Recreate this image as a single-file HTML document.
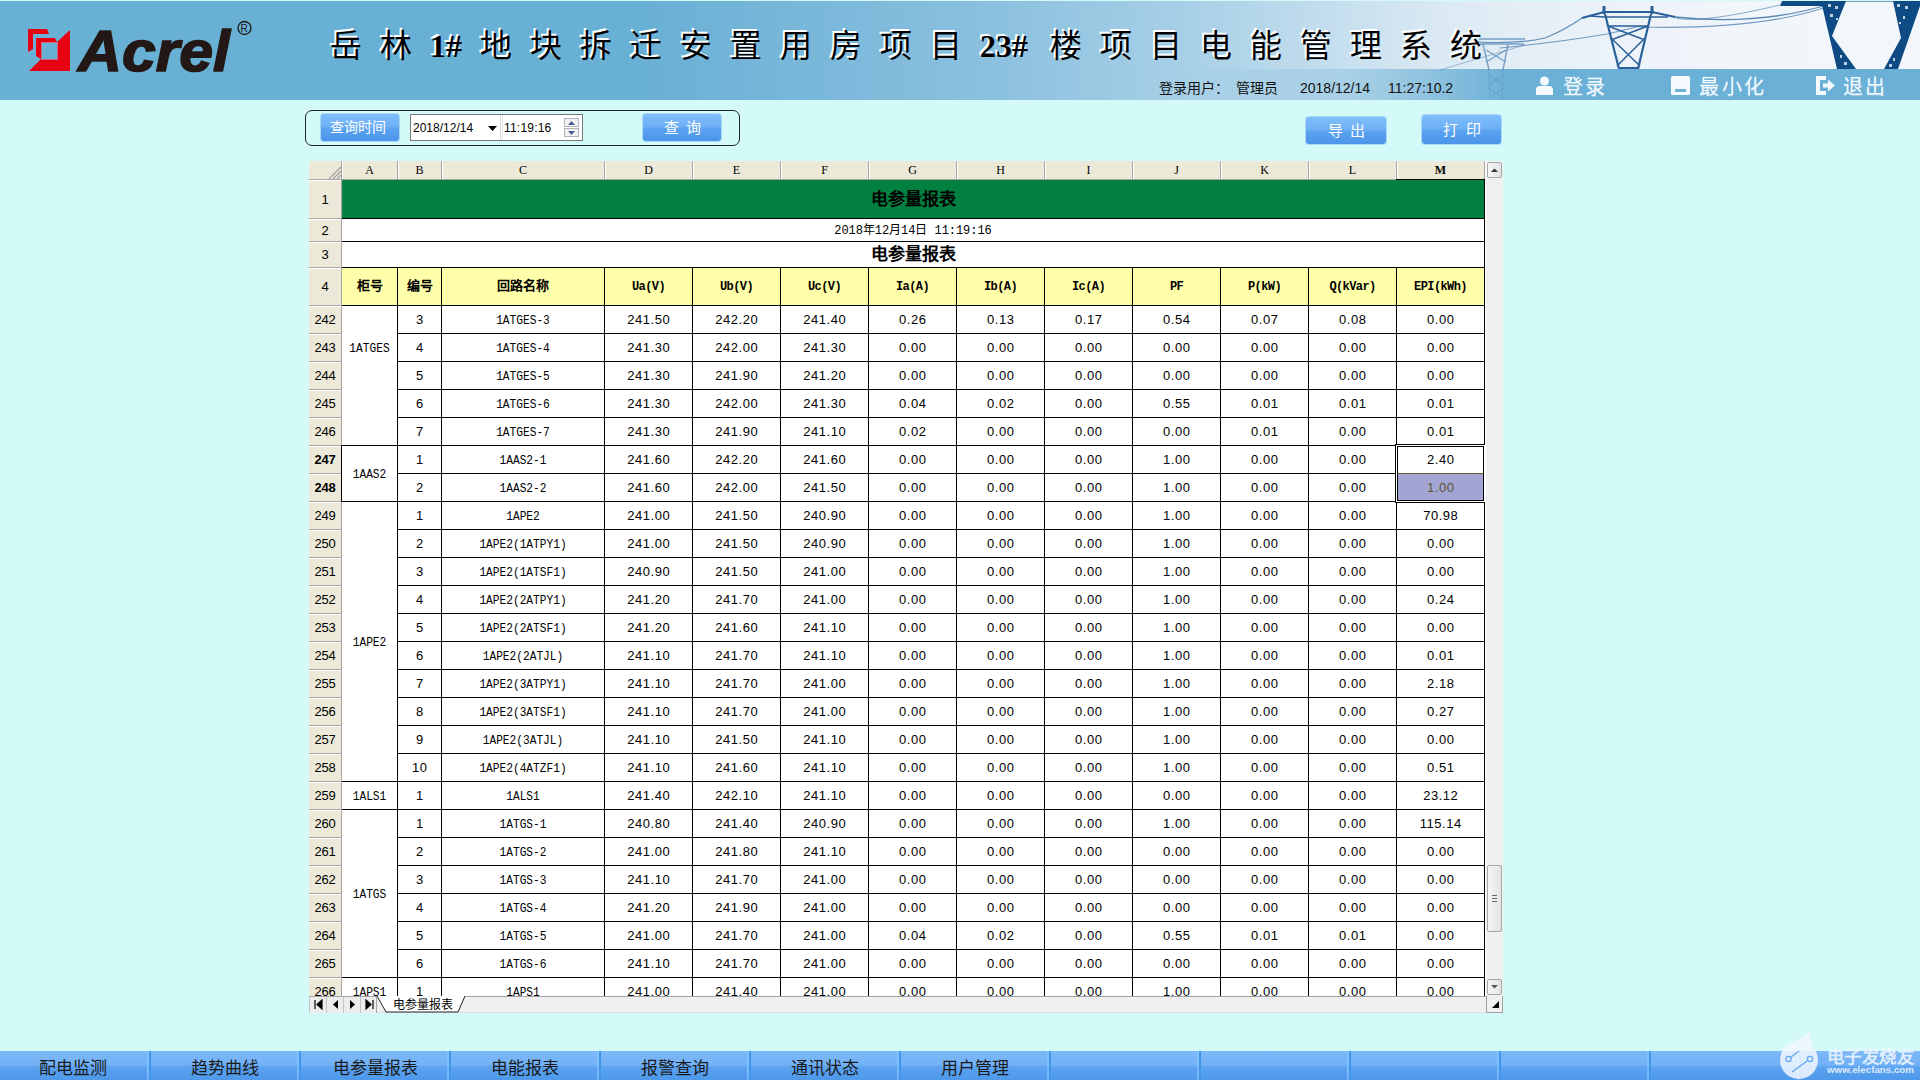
<!DOCTYPE html>
<html lang="zh-CN">
<head>
<meta charset="utf-8">
<title>电参量报表</title>
<style>
*{margin:0;padding:0;box-sizing:border-box}
html,body{width:1920px;height:1080px;overflow:hidden}
body{background:#D3F9F9;font-family:"Liberation Sans",sans-serif;position:relative}
.abs{position:absolute}
#hdr{position:absolute;left:0;top:1px;width:1920px;height:99px;
 background:linear-gradient(90deg,#69B0D5 0px,#69B0D5 640px,#7AB8DA 820px,#8CC1DF 1000px,#A6CFE6 1180px,#C4DEEE 1330px,#DCEAF3 1450px,#EAF1F8 1580px,#F1F6FA 1750px,#F3F7FB 1920px)}
#band{position:absolute;left:1180px;top:68px;width:740px;height:31px;
 background:linear-gradient(90deg,rgba(107,176,214,0) 0px,rgba(107,176,214,0.35) 170px,rgba(107,176,214,0.8) 280px,#6BB0D6 330px)}
#title{position:absolute;left:329px;top:26px;width:1200px;height:40px;white-space:nowrap;font-family:"Liberation Serif",serif;font-weight:500;font-size:32px;color:#000;text-shadow:-2px -2px 0 #fff;line-height:38px}
#title span{position:absolute;top:0}
#user{position:absolute;top:78px;left:1159px;font-size:14px;color:#111;white-space:nowrap;line-height:18px}
.hb{position:absolute;top:74px;color:#F4FAFF;font-size:20px;font-weight:300;letter-spacing:2px;line-height:24px;white-space:nowrap;text-shadow:0 1px 0 rgba(255,255,255,0.3)}
/* toolbar */
#qbox{position:absolute;left:305px;top:110px;width:435px;height:36px;border:1px solid #222;border-radius:7px}
.btn{position:absolute;height:27px;border-radius:3px;background:linear-gradient(180deg,#80BEFA 0%,#6FB0F6 45%,#5AA2F0 55%,#4B95EA 100%);color:#fff;font-size:16px;line-height:27px;text-align:center;white-space:nowrap;box-shadow:0 0 0 1px rgba(90,160,240,0.35)}
#dt{position:absolute;left:410px;top:114px;width:173px;height:27px;background:#fff;border:1px solid #777}
.mono{font-family:"Liberation Mono",monospace}
/* sheet */
#sheet{position:absolute;left:309px;top:161px;width:1176px;height:835px;overflow:hidden;background:#fff}
#sheet i{position:absolute;display:block}
#sheet .t{position:absolute;display:block;text-align:center;height:16px;line-height:16px;font-weight:normal;white-space:nowrap;color:#000}
.ch{font-family:"Liberation Serif",serif;font-size:12px}
.chb{font-weight:bold!important}
.rh{font-family:"Liberation Sans",sans-serif;font-size:13px;letter-spacing:-0.2px}
.rb{font-weight:bold!important}
.d{font-family:"Liberation Sans",sans-serif;font-size:13px;letter-spacing:0.5px;text-indent:0.5px}
.nm{font-family:"Liberation Mono",monospace!important;font-size:13px;letter-spacing:0!important;text-indent:0!important;transform:translateY(1px) scaleX(0.86)}
.sel{color:#5E5428!important}
.big{font-size:17px;font-weight:bold!important}
.date{font-family:"Liberation Mono",monospace;font-size:12px;letter-spacing:-0.05px}
.hd{font-family:"Liberation Mono",monospace;font-size:12px;font-weight:bold!important;letter-spacing:-0.6px}
.hdc{font-size:13px!important;letter-spacing:0!important}
#vscroll{position:absolute;left:1485px;top:161px;width:18px;height:835px;background:#F0F0F0;border-left:1px solid #fff}
.sbtn{position:absolute;left:1px;width:15px;height:16px;border:1px solid #A8A8A8;border-radius:2px;background:linear-gradient(90deg,#F6F6F6,#E2E2E2)}
#tabbar{position:absolute;left:309px;top:996px;width:1194px;height:17px;background:#EFEFEF;border-top:1px solid #A5A5A5;border-bottom:1px solid #E0E0E0}
.nb{position:absolute;top:0;width:17px;height:16px;border-left:1px solid #C4C4C4;background:#EDEDED}
/* nav */
#nav{position:absolute;left:0;top:1051px;width:1920px;height:29px;background:linear-gradient(180deg,#7DB9F8 0px,#72B1F7 14px,#5CA3F0 16px,#4D98EA 29px)}
.nv{position:absolute;top:0;width:150px;height:29px;border-right:2px solid #4196EC;box-shadow:inset -3px 0 0 -1px rgba(140,200,255,0.6)}
.nv span{position:absolute;left:0;right:0;top:7px;text-align:center;font-size:17px;line-height:22px;color:#1A1A1A;white-space:nowrap}
</style>
</head>
<body>
<div id="hdr">
 <div id="band"></div>
 <svg width="1920" height="99" style="position:absolute;left:0;top:0" viewBox="0 1 1920 99">
  <g fill="none" stroke="#3F75A8" stroke-linecap="round">
   <path d="M1440 70 Q1490 55 1525 45" stroke-width="1" opacity="0.45"/>
   <path d="M1478 42 Q1520 44 1545 38 Q1565 30 1582 18" stroke-width="1.2" opacity="0.8"/>
   <path d="M1500 48 Q1560 42 1607 34 Q1625 30 1640 26" stroke-width="1.1" opacity="0.7"/>
   <path d="M1675 17 Q1760 26 1830 4" stroke-width="1.3" opacity="0.85"/>
   <path d="M1640 27 Q1760 30 1830 6" stroke-width="1.1" opacity="0.7"/>
   <path d="M1676 18 Q1700 24 1780 5" stroke-width="1" opacity="0.6"/>
  </g>
  <g fill="none" stroke="#5F8DB8" stroke-width="1.4" opacity="0.8">
   <path d="M1479 39 H1525 M1480 44 H1524"/>
   <path d="M1483 44 L1489 70 M1508 44 L1503 70"/>
   <path d="M1486 50 L1506 62 M1506 50 L1486 62"/>
  </g>
  <g fill="none" stroke="#5F8DB8" stroke-width="1.3" opacity="0.35">
   <path d="M1489 70 L1490 99 M1503 70 L1502 99 M1489 75 L1503 85 M1503 75 L1489 85 M1489 88 L1503 98 M1503 88 L1489 98"/>
  </g>
  <g fill="none" stroke="#2A6199" stroke-width="2.2">
   <path d="M1582 18 L1604 12 H1652 L1675 17"/>
   <path d="M1590 16 L1604 17 H1652 L1668 17" stroke-width="1.4"/>
   <path d="M1604 6 V14 M1652 6 V14" stroke-width="3"/>
   <path d="M1605 14 L1619 69 M1651 14 L1638 69"/>
   <path d="M1607 26 H1649" stroke-width="1.4"/>
   <path d="M1611 38 L1640 66 M1645 38 L1617 66 M1608 26 L1645 40 M1648 26 L1611 40" stroke-width="1.5"/>
   <path d="M1618 68 H1639" stroke-width="2"/>
  </g>
  <g fill="#0E4A84">
   <path d="M1782 1 H1826 V6 H1780 Z"/>
   <path d="M1821 1 H1846 L1832 36 L1856 69 H1837 Z"/>
   <path d="M1893 1 H1920 V6 L1898 69 H1884 L1901 38 Z"/>
  </g>
  <path d="M1846 1.5 H1893" stroke="#7A9CC0" stroke-width="1"/>
  <g fill="#DCE8F2" opacity="0.85">
   <rect x="1828" y="4" width="3" height="3"/><rect x="1835" y="6" width="3" height="3"/><rect x="1830" y="14" width="3" height="3"/><rect x="1836" y="18" width="2" height="2"/>
   <rect x="1840" y="55" width="2" height="3"/><rect x="1844" y="62" width="3" height="3"/>
   <rect x="1897" y="4" width="3" height="3"/><rect x="1905" y="6" width="3" height="3"/><rect x="1903" y="16" width="2" height="3"/><rect x="1899" y="22" width="2" height="2"/>
   <rect x="1893" y="58" width="2" height="3"/><rect x="1889" y="64" width="3" height="3"/>
  </g>
 </svg>
 <!-- logo -->
 <svg width="240" height="60" style="position:absolute;left:20px;top:18px" viewBox="20 19 240 60">
  <g fill="#E60012">
   <path d="M28 29 H47 L49 34 H33 V49 L28 52 Z"/>
   <path d="M36 38 H55 L57 42 H41 V59 L36 56 Z"/>
   <path d="M70 30 V71 H29 L41 59 H57 V42 Z"/>
  </g>
  <rect x="41.5" y="42.5" width="16" height="17" fill="none" stroke="#C86A86" stroke-width="1"/>
  <text x="78" y="71" font-family="Liberation Sans" font-weight="bold" font-style="italic" font-size="58" fill="#231815" stroke="#231815" stroke-width="1.6" textLength="152" lengthAdjust="spacingAndGlyphs">Acrel</text>
  <circle cx="244.5" cy="28" r="6.5" fill="none" stroke="#231815" stroke-width="1.3"/>
  <text x="240.5" y="32" font-family="Liberation Sans" font-size="10" fill="#231815">R</text>
 </svg>
 <div id="title"><span style="left:1px">岳</span><span style="left:51px">林</span><span style="left:101px;font-weight:bold">1#</span><span style="left:151px">地</span><span style="left:201px">块</span><span style="left:251px">拆</span><span style="left:301px">迁</span><span style="left:351px">安</span><span style="left:401px">置</span><span style="left:451px">用</span><span style="left:501px">房</span><span style="left:551px">项</span><span style="left:601px">目</span><span style="left:651px;font-weight:bold">23#</span><span style="left:721px">楼</span><span style="left:771px">项</span><span style="left:821px">目</span><span style="left:871px">电</span><span style="left:921px">能</span><span style="left:971px">管</span><span style="left:1021px">理</span><span style="left:1071px">系</span><span style="left:1121px">统</span></div>
 <div id="user"><span style="position:absolute;left:0">登录用户：</span><span style="position:absolute;left:77px">管理员</span><span style="position:absolute;left:141px">2018/12/14</span><span style="position:absolute;left:229px">11:27:10.2</span></div>
 <!-- header buttons -->
 <svg width="19" height="19" style="position:absolute;left:1535px;top:75px" viewBox="0 0 19 19"><circle cx="9.5" cy="5" r="4.5" fill="#F4FAFF"/><path d="M1 19 V14 Q1 10 5 10 H14 Q18 10 18 14 V19 Z" fill="#F4FAFF"/></svg>
 <div class="hb" style="left:1563px">登录</div>
 <svg width="19" height="19" style="position:absolute;left:1671px;top:75px" viewBox="0 0 19 19"><rect x="0" y="0" width="19" height="19" rx="1.5" fill="#F4FAFF"/><rect x="4" y="13" width="11" height="3" fill="#6BB0D6"/></svg>
 <div class="hb" style="left:1699px;letter-spacing:2.5px">最小化</div>
 <svg width="19" height="19" style="position:absolute;left:1816px;top:75px" viewBox="0 0 19 19"><path d="M0 0 H10 V4 H4 V15 H10 V19 H0 Z" fill="#F4FAFF"/><path d="M7 7.5 H12 V3.5 L19 9.5 L12 15.5 V11.5 H7 Z" fill="#F4FAFF"/></svg>
 <div class="hb" style="left:1843px">退出</div>
</div>

<!-- toolbar -->
<div id="qbox"></div>
<div class="btn" style="left:321px;top:114px;width:78px;font-size:14px;text-indent:-4px">查询时间</div>
<div id="dt">
 <span style="position:absolute;left:2px;top:6px;font-size:12px;line-height:14px">2018/12/14</span>
 <svg width="9" height="5" style="position:absolute;left:77px;top:11px"><path d="M0 0 H9 L4.5 5 Z" fill="#000"/></svg>
 <i style="position:absolute;left:89px;top:0px;width:1px;height:25px;background:#D8D8D8;display:block"></i><i style="position:absolute;left:91px;top:0px;width:1px;height:25px;background:#E8E8E8;display:block"></i>
 <span style="position:absolute;left:93px;top:6px;font-size:12px;line-height:14px;letter-spacing:0.2px">11:19:16</span>
 <i style="position:absolute;left:153px;top:3px;width:15px;height:9px;border:1px solid #B0B4C0;background:#F2F2F2;display:block"></i>
 <i style="position:absolute;left:153px;top:13px;width:15px;height:9px;border:1px solid #B0B4C0;background:#F2F2F2;display:block"></i>
 <svg width="7" height="4" style="position:absolute;left:157px;top:6px"><path d="M0 4 H7 L3.5 0 Z" fill="#4A5A9A"/></svg>
 <svg width="7" height="4" style="position:absolute;left:157px;top:16px"><path d="M0 0 H7 L3.5 4 Z" fill="#4A5A9A"/></svg>
</div>
<div class="btn" style="left:643px;top:114px;width:78px;font-size:15px;letter-spacing:7px;text-indent:7px">查询</div>
<div class="btn" style="left:1306px;top:117px;width:80px;font-size:15px;letter-spacing:7px;text-indent:7px">导出</div>
<div class="btn" style="left:1422px;top:115px;width:79px;height:29px;line-height:29px;font-size:15px;letter-spacing:8px;text-indent:8px">打印</div>

<!-- sheet -->
<div id="sheet">
<i style="left:0px;top:0px;width:1175px;height:18px;background:#ECE9D8;"></i>
<i style="left:0px;top:18px;width:1175px;height:1px;background:#A5A5A5;"></i>
<i style="left:32px;top:0px;width:1px;height:19px;background:#A5A5A5;"></i>
<i style="left:33px;top:0px;width:1px;height:18px;background:#fff;"></i>
<i style="left:88px;top:0px;width:1px;height:18px;background:#A5A5A5;"></i>
<i style="left:89px;top:0px;width:1px;height:18px;background:#fff;"></i>
<i style="left:132px;top:0px;width:1px;height:18px;background:#A5A5A5;"></i>
<i style="left:133px;top:0px;width:1px;height:18px;background:#fff;"></i>
<i style="left:295px;top:0px;width:1px;height:18px;background:#A5A5A5;"></i>
<i style="left:296px;top:0px;width:1px;height:18px;background:#fff;"></i>
<i style="left:383px;top:0px;width:1px;height:18px;background:#A5A5A5;"></i>
<i style="left:384px;top:0px;width:1px;height:18px;background:#fff;"></i>
<i style="left:471px;top:0px;width:1px;height:18px;background:#A5A5A5;"></i>
<i style="left:472px;top:0px;width:1px;height:18px;background:#fff;"></i>
<i style="left:559px;top:0px;width:1px;height:18px;background:#A5A5A5;"></i>
<i style="left:560px;top:0px;width:1px;height:18px;background:#fff;"></i>
<i style="left:647px;top:0px;width:1px;height:18px;background:#A5A5A5;"></i>
<i style="left:648px;top:0px;width:1px;height:18px;background:#fff;"></i>
<i style="left:735px;top:0px;width:1px;height:18px;background:#A5A5A5;"></i>
<i style="left:736px;top:0px;width:1px;height:18px;background:#fff;"></i>
<i style="left:823px;top:0px;width:1px;height:18px;background:#A5A5A5;"></i>
<i style="left:824px;top:0px;width:1px;height:18px;background:#fff;"></i>
<i style="left:911px;top:0px;width:1px;height:18px;background:#A5A5A5;"></i>
<i style="left:912px;top:0px;width:1px;height:18px;background:#fff;"></i>
<i style="left:999px;top:0px;width:1px;height:18px;background:#A5A5A5;"></i>
<i style="left:1000px;top:0px;width:1px;height:18px;background:#fff;"></i>
<i style="left:1087px;top:0px;width:1px;height:18px;background:#A5A5A5;"></i>
<i style="left:1088px;top:0px;width:1px;height:18px;background:#fff;"></i>
<i style="left:1175px;top:0px;width:1px;height:18px;background:#A5A5A5;"></i>
<i style="left:1176px;top:0px;width:1px;height:18px;background:#fff;"></i>
<b class="t ch" style="left:33px;width:55px;top:1px">A</b>
<b class="t ch" style="left:89px;width:43px;top:1px">B</b>
<b class="t ch" style="left:133px;width:162px;top:1px">C</b>
<b class="t ch" style="left:296px;width:87px;top:1px">D</b>
<b class="t ch" style="left:384px;width:87px;top:1px">E</b>
<b class="t ch" style="left:472px;width:87px;top:1px">F</b>
<b class="t ch" style="left:560px;width:87px;top:1px">G</b>
<b class="t ch" style="left:648px;width:87px;top:1px">H</b>
<b class="t ch" style="left:736px;width:87px;top:1px">I</b>
<b class="t ch" style="left:824px;width:87px;top:1px">J</b>
<b class="t ch" style="left:912px;width:87px;top:1px">K</b>
<b class="t ch" style="left:1000px;width:87px;top:1px">L</b>
<b class="t ch chb" style="left:1088px;width:87px;top:1px">M</b>
<i style="left:1087px;top:18px;width:89px;height:1px;background:#000;"></i>
<i style="left:0px;top:19px;width:32px;height:816px;background:#ECE9D8;"></i>
<i style="left:32px;top:19px;width:1px;height:816px;background:#A5A5A5;"></i>
<i style="left:0px;top:19px;width:32px;height:1px;background:#fff;"></i>
<i style="left:0px;top:57px;width:32px;height:1px;background:#A5A5A5;"></i>
<b class="t rh" style="left:0px;width:32px;top:30.5px">1</b>
<i style="left:0px;top:58px;width:32px;height:1px;background:#fff;"></i>
<i style="left:0px;top:80px;width:32px;height:1px;background:#A5A5A5;"></i>
<b class="t rh" style="left:0px;width:32px;top:61.5px">2</b>
<i style="left:0px;top:81px;width:32px;height:1px;background:#fff;"></i>
<i style="left:0px;top:106px;width:32px;height:1px;background:#A5A5A5;"></i>
<b class="t rh" style="left:0px;width:32px;top:86.0px">3</b>
<i style="left:0px;top:107px;width:32px;height:1px;background:#fff;"></i>
<i style="left:0px;top:144px;width:32px;height:1px;background:#A5A5A5;"></i>
<b class="t rh" style="left:0px;width:32px;top:118.0px">4</b>
<i style="left:0px;top:145px;width:32px;height:1px;background:#fff;"></i>
<i style="left:0px;top:172px;width:32px;height:1px;background:#A5A5A5;"></i>
<b class="t rh" style="left:0px;width:32px;top:151.0px">242</b>
<i style="left:0px;top:173px;width:32px;height:1px;background:#fff;"></i>
<i style="left:0px;top:200px;width:32px;height:1px;background:#A5A5A5;"></i>
<b class="t rh" style="left:0px;width:32px;top:179.0px">243</b>
<i style="left:0px;top:201px;width:32px;height:1px;background:#fff;"></i>
<i style="left:0px;top:228px;width:32px;height:1px;background:#A5A5A5;"></i>
<b class="t rh" style="left:0px;width:32px;top:207.0px">244</b>
<i style="left:0px;top:229px;width:32px;height:1px;background:#fff;"></i>
<i style="left:0px;top:256px;width:32px;height:1px;background:#A5A5A5;"></i>
<b class="t rh" style="left:0px;width:32px;top:235.0px">245</b>
<i style="left:0px;top:257px;width:32px;height:1px;background:#fff;"></i>
<i style="left:0px;top:284px;width:32px;height:1px;background:#A5A5A5;"></i>
<b class="t rh" style="left:0px;width:32px;top:263.0px">246</b>
<i style="left:0px;top:285px;width:32px;height:1px;background:#fff;"></i>
<i style="left:0px;top:312px;width:32px;height:1px;background:#A5A5A5;"></i>
<b class="t rh rb" style="left:0px;width:32px;top:291.0px">247</b>
<i style="left:0px;top:313px;width:32px;height:1px;background:#fff;"></i>
<i style="left:0px;top:340px;width:32px;height:1px;background:#A5A5A5;"></i>
<b class="t rh rb" style="left:0px;width:32px;top:319.0px">248</b>
<i style="left:0px;top:341px;width:32px;height:1px;background:#fff;"></i>
<i style="left:0px;top:368px;width:32px;height:1px;background:#A5A5A5;"></i>
<b class="t rh" style="left:0px;width:32px;top:347.0px">249</b>
<i style="left:0px;top:369px;width:32px;height:1px;background:#fff;"></i>
<i style="left:0px;top:396px;width:32px;height:1px;background:#A5A5A5;"></i>
<b class="t rh" style="left:0px;width:32px;top:375.0px">250</b>
<i style="left:0px;top:397px;width:32px;height:1px;background:#fff;"></i>
<i style="left:0px;top:424px;width:32px;height:1px;background:#A5A5A5;"></i>
<b class="t rh" style="left:0px;width:32px;top:403.0px">251</b>
<i style="left:0px;top:425px;width:32px;height:1px;background:#fff;"></i>
<i style="left:0px;top:452px;width:32px;height:1px;background:#A5A5A5;"></i>
<b class="t rh" style="left:0px;width:32px;top:431.0px">252</b>
<i style="left:0px;top:453px;width:32px;height:1px;background:#fff;"></i>
<i style="left:0px;top:480px;width:32px;height:1px;background:#A5A5A5;"></i>
<b class="t rh" style="left:0px;width:32px;top:459.0px">253</b>
<i style="left:0px;top:481px;width:32px;height:1px;background:#fff;"></i>
<i style="left:0px;top:508px;width:32px;height:1px;background:#A5A5A5;"></i>
<b class="t rh" style="left:0px;width:32px;top:487.0px">254</b>
<i style="left:0px;top:509px;width:32px;height:1px;background:#fff;"></i>
<i style="left:0px;top:536px;width:32px;height:1px;background:#A5A5A5;"></i>
<b class="t rh" style="left:0px;width:32px;top:515.0px">255</b>
<i style="left:0px;top:537px;width:32px;height:1px;background:#fff;"></i>
<i style="left:0px;top:564px;width:32px;height:1px;background:#A5A5A5;"></i>
<b class="t rh" style="left:0px;width:32px;top:543.0px">256</b>
<i style="left:0px;top:565px;width:32px;height:1px;background:#fff;"></i>
<i style="left:0px;top:592px;width:32px;height:1px;background:#A5A5A5;"></i>
<b class="t rh" style="left:0px;width:32px;top:571.0px">257</b>
<i style="left:0px;top:593px;width:32px;height:1px;background:#fff;"></i>
<i style="left:0px;top:620px;width:32px;height:1px;background:#A5A5A5;"></i>
<b class="t rh" style="left:0px;width:32px;top:599.0px">258</b>
<i style="left:0px;top:621px;width:32px;height:1px;background:#fff;"></i>
<i style="left:0px;top:648px;width:32px;height:1px;background:#A5A5A5;"></i>
<b class="t rh" style="left:0px;width:32px;top:627.0px">259</b>
<i style="left:0px;top:649px;width:32px;height:1px;background:#fff;"></i>
<i style="left:0px;top:676px;width:32px;height:1px;background:#A5A5A5;"></i>
<b class="t rh" style="left:0px;width:32px;top:655.0px">260</b>
<i style="left:0px;top:677px;width:32px;height:1px;background:#fff;"></i>
<i style="left:0px;top:704px;width:32px;height:1px;background:#A5A5A5;"></i>
<b class="t rh" style="left:0px;width:32px;top:683.0px">261</b>
<i style="left:0px;top:705px;width:32px;height:1px;background:#fff;"></i>
<i style="left:0px;top:732px;width:32px;height:1px;background:#A5A5A5;"></i>
<b class="t rh" style="left:0px;width:32px;top:711.0px">262</b>
<i style="left:0px;top:733px;width:32px;height:1px;background:#fff;"></i>
<i style="left:0px;top:760px;width:32px;height:1px;background:#A5A5A5;"></i>
<b class="t rh" style="left:0px;width:32px;top:739.0px">263</b>
<i style="left:0px;top:761px;width:32px;height:1px;background:#fff;"></i>
<i style="left:0px;top:788px;width:32px;height:1px;background:#A5A5A5;"></i>
<b class="t rh" style="left:0px;width:32px;top:767.0px">264</b>
<i style="left:0px;top:789px;width:32px;height:1px;background:#fff;"></i>
<i style="left:0px;top:816px;width:32px;height:1px;background:#A5A5A5;"></i>
<b class="t rh" style="left:0px;width:32px;top:795.0px">265</b>
<i style="left:0px;top:817px;width:32px;height:1px;background:#fff;"></i>
<i style="left:0px;top:844px;width:32px;height:1px;background:#A5A5A5;"></i>
<b class="t rh" style="left:0px;width:32px;top:823.0px">266</b>
<i style="left:33px;top:19px;width:1142px;height:38px;background:#028040;"></i>
<i style="left:33px;top:57px;width:1143px;height:1px;background:#000;"></i>
<i style="left:1175px;top:19px;width:1px;height:38px;background:#000;"></i>
<i style="left:33px;top:58px;width:1142px;height:22px;background:#fff;"></i>
<i style="left:33px;top:80px;width:1143px;height:1px;background:#000;"></i>
<i style="left:33px;top:81px;width:1142px;height:25px;background:#fff;"></i>
<i style="left:33px;top:106px;width:1143px;height:1px;background:#000;"></i>
<i style="left:1175px;top:58px;width:1px;height:49px;background:#000;"></i>
<b class="t big" style="left:33px;width:1142px;top:31px">电参量报表</b>
<b class="t date" style="left:33px;width:1142px;top:62px">2018年12月14日 11:19:16</b>
<b class="t big" style="left:33px;width:1142px;top:86px">电参量报表</b>
<i style="left:33px;top:107px;width:1142px;height:37px;background:#FFFFAA;"></i>
<b class="t hd hdc" style="left:33px;width:55px;top:117.5px">柜号</b>
<b class="t hd hdc" style="left:89px;width:43px;top:117.5px">编号</b>
<b class="t hd hdc" style="left:133px;width:162px;top:117.5px">回路名称</b>
<b class="t hd" style="left:296px;width:87px;top:117.5px">Ua(V)</b>
<b class="t hd" style="left:384px;width:87px;top:117.5px">Ub(V)</b>
<b class="t hd" style="left:472px;width:87px;top:117.5px">Uc(V)</b>
<b class="t hd" style="left:560px;width:87px;top:117.5px">Ia(A)</b>
<b class="t hd" style="left:648px;width:87px;top:117.5px">Ib(A)</b>
<b class="t hd" style="left:736px;width:87px;top:117.5px">Ic(A)</b>
<b class="t hd" style="left:824px;width:87px;top:117.5px">PF</b>
<b class="t hd" style="left:912px;width:87px;top:117.5px">P(kW)</b>
<b class="t hd" style="left:1000px;width:87px;top:117.5px">Q(kVar)</b>
<b class="t hd" style="left:1088px;width:87px;top:117.5px">EPI(kWh)</b>
<i style="left:33px;top:145px;width:1142px;height:690px;background:#fff;"></i>
<i style="left:33px;top:144px;width:1143px;height:1px;background:#000;"></i>
<i style="left:89px;top:172px;width:1087px;height:1px;background:#000;"></i>
<i style="left:89px;top:200px;width:1087px;height:1px;background:#000;"></i>
<i style="left:89px;top:228px;width:1087px;height:1px;background:#000;"></i>
<i style="left:89px;top:256px;width:1087px;height:1px;background:#000;"></i>
<i style="left:33px;top:284px;width:1143px;height:1px;background:#000;"></i>
<i style="left:89px;top:312px;width:1087px;height:1px;background:#000;"></i>
<i style="left:33px;top:340px;width:1143px;height:1px;background:#000;"></i>
<i style="left:89px;top:368px;width:1087px;height:1px;background:#000;"></i>
<i style="left:89px;top:396px;width:1087px;height:1px;background:#000;"></i>
<i style="left:89px;top:424px;width:1087px;height:1px;background:#000;"></i>
<i style="left:89px;top:452px;width:1087px;height:1px;background:#000;"></i>
<i style="left:89px;top:480px;width:1087px;height:1px;background:#000;"></i>
<i style="left:89px;top:508px;width:1087px;height:1px;background:#000;"></i>
<i style="left:89px;top:536px;width:1087px;height:1px;background:#000;"></i>
<i style="left:89px;top:564px;width:1087px;height:1px;background:#000;"></i>
<i style="left:89px;top:592px;width:1087px;height:1px;background:#000;"></i>
<i style="left:33px;top:620px;width:1143px;height:1px;background:#000;"></i>
<i style="left:33px;top:648px;width:1143px;height:1px;background:#000;"></i>
<i style="left:89px;top:676px;width:1087px;height:1px;background:#000;"></i>
<i style="left:89px;top:704px;width:1087px;height:1px;background:#000;"></i>
<i style="left:89px;top:732px;width:1087px;height:1px;background:#000;"></i>
<i style="left:89px;top:760px;width:1087px;height:1px;background:#000;"></i>
<i style="left:89px;top:788px;width:1087px;height:1px;background:#000;"></i>
<i style="left:33px;top:816px;width:1143px;height:1px;background:#000;"></i>
<i style="left:88px;top:107px;width:1px;height:728px;background:#000;"></i>
<i style="left:132px;top:107px;width:1px;height:728px;background:#000;"></i>
<i style="left:295px;top:107px;width:1px;height:728px;background:#000;"></i>
<i style="left:383px;top:107px;width:1px;height:728px;background:#000;"></i>
<i style="left:471px;top:107px;width:1px;height:728px;background:#000;"></i>
<i style="left:559px;top:107px;width:1px;height:728px;background:#000;"></i>
<i style="left:647px;top:107px;width:1px;height:728px;background:#000;"></i>
<i style="left:735px;top:107px;width:1px;height:728px;background:#000;"></i>
<i style="left:823px;top:107px;width:1px;height:728px;background:#000;"></i>
<i style="left:911px;top:107px;width:1px;height:728px;background:#000;"></i>
<i style="left:999px;top:107px;width:1px;height:728px;background:#000;"></i>
<i style="left:1087px;top:107px;width:1px;height:728px;background:#000;"></i>
<i style="left:1175px;top:107px;width:1px;height:728px;background:#000;"></i>
<i style="left:32px;top:284px;width:1px;height:57px;background:#000;"></i>
<i style="left:1086px;top:283px;width:91px;height:59px;background:#000;"></i>
<i style="left:1087px;top:284px;width:89px;height:57px;background:#fff;"></i>
<i style="left:1088px;top:285px;width:87px;height:55px;background:#000;"></i>
<i style="left:1089px;top:286px;width:85px;height:26px;background:#fff;"></i>
<i style="left:1089px;top:312px;width:85px;height:1px;background:#6B6030;"></i>
<i style="left:1089px;top:313px;width:85px;height:26px;background:#A2A5D4;"></i>
<b class="t d" style="left:89px;width:43px;top:150.5px">3</b>
<b class="t d nm" style="left:133px;width:162px;top:150.5px">1ATGES-3</b>
<b class="t d" style="left:296px;width:87px;top:150.5px">241.50</b>
<b class="t d" style="left:384px;width:87px;top:150.5px">242.20</b>
<b class="t d" style="left:472px;width:87px;top:150.5px">241.40</b>
<b class="t d" style="left:560px;width:87px;top:150.5px">0.26</b>
<b class="t d" style="left:648px;width:87px;top:150.5px">0.13</b>
<b class="t d" style="left:736px;width:87px;top:150.5px">0.17</b>
<b class="t d" style="left:824px;width:87px;top:150.5px">0.54</b>
<b class="t d" style="left:912px;width:87px;top:150.5px">0.07</b>
<b class="t d" style="left:1000px;width:87px;top:150.5px">0.08</b>
<b class="t d" style="left:1088px;width:87px;top:150.5px">0.00</b>
<b class="t d" style="left:89px;width:43px;top:178.5px">4</b>
<b class="t d nm" style="left:133px;width:162px;top:178.5px">1ATGES-4</b>
<b class="t d" style="left:296px;width:87px;top:178.5px">241.30</b>
<b class="t d" style="left:384px;width:87px;top:178.5px">242.00</b>
<b class="t d" style="left:472px;width:87px;top:178.5px">241.30</b>
<b class="t d" style="left:560px;width:87px;top:178.5px">0.00</b>
<b class="t d" style="left:648px;width:87px;top:178.5px">0.00</b>
<b class="t d" style="left:736px;width:87px;top:178.5px">0.00</b>
<b class="t d" style="left:824px;width:87px;top:178.5px">0.00</b>
<b class="t d" style="left:912px;width:87px;top:178.5px">0.00</b>
<b class="t d" style="left:1000px;width:87px;top:178.5px">0.00</b>
<b class="t d" style="left:1088px;width:87px;top:178.5px">0.00</b>
<b class="t d" style="left:89px;width:43px;top:206.5px">5</b>
<b class="t d nm" style="left:133px;width:162px;top:206.5px">1ATGES-5</b>
<b class="t d" style="left:296px;width:87px;top:206.5px">241.30</b>
<b class="t d" style="left:384px;width:87px;top:206.5px">241.90</b>
<b class="t d" style="left:472px;width:87px;top:206.5px">241.20</b>
<b class="t d" style="left:560px;width:87px;top:206.5px">0.00</b>
<b class="t d" style="left:648px;width:87px;top:206.5px">0.00</b>
<b class="t d" style="left:736px;width:87px;top:206.5px">0.00</b>
<b class="t d" style="left:824px;width:87px;top:206.5px">0.00</b>
<b class="t d" style="left:912px;width:87px;top:206.5px">0.00</b>
<b class="t d" style="left:1000px;width:87px;top:206.5px">0.00</b>
<b class="t d" style="left:1088px;width:87px;top:206.5px">0.00</b>
<b class="t d" style="left:89px;width:43px;top:234.5px">6</b>
<b class="t d nm" style="left:133px;width:162px;top:234.5px">1ATGES-6</b>
<b class="t d" style="left:296px;width:87px;top:234.5px">241.30</b>
<b class="t d" style="left:384px;width:87px;top:234.5px">242.00</b>
<b class="t d" style="left:472px;width:87px;top:234.5px">241.30</b>
<b class="t d" style="left:560px;width:87px;top:234.5px">0.04</b>
<b class="t d" style="left:648px;width:87px;top:234.5px">0.02</b>
<b class="t d" style="left:736px;width:87px;top:234.5px">0.00</b>
<b class="t d" style="left:824px;width:87px;top:234.5px">0.55</b>
<b class="t d" style="left:912px;width:87px;top:234.5px">0.01</b>
<b class="t d" style="left:1000px;width:87px;top:234.5px">0.01</b>
<b class="t d" style="left:1088px;width:87px;top:234.5px">0.01</b>
<b class="t d" style="left:89px;width:43px;top:262.5px">7</b>
<b class="t d nm" style="left:133px;width:162px;top:262.5px">1ATGES-7</b>
<b class="t d" style="left:296px;width:87px;top:262.5px">241.30</b>
<b class="t d" style="left:384px;width:87px;top:262.5px">241.90</b>
<b class="t d" style="left:472px;width:87px;top:262.5px">241.10</b>
<b class="t d" style="left:560px;width:87px;top:262.5px">0.02</b>
<b class="t d" style="left:648px;width:87px;top:262.5px">0.00</b>
<b class="t d" style="left:736px;width:87px;top:262.5px">0.00</b>
<b class="t d" style="left:824px;width:87px;top:262.5px">0.00</b>
<b class="t d" style="left:912px;width:87px;top:262.5px">0.01</b>
<b class="t d" style="left:1000px;width:87px;top:262.5px">0.00</b>
<b class="t d" style="left:1088px;width:87px;top:262.5px">0.01</b>
<b class="t d" style="left:89px;width:43px;top:290.5px">1</b>
<b class="t d nm" style="left:133px;width:162px;top:290.5px">1AAS2-1</b>
<b class="t d" style="left:296px;width:87px;top:290.5px">241.60</b>
<b class="t d" style="left:384px;width:87px;top:290.5px">242.20</b>
<b class="t d" style="left:472px;width:87px;top:290.5px">241.60</b>
<b class="t d" style="left:560px;width:87px;top:290.5px">0.00</b>
<b class="t d" style="left:648px;width:87px;top:290.5px">0.00</b>
<b class="t d" style="left:736px;width:87px;top:290.5px">0.00</b>
<b class="t d" style="left:824px;width:87px;top:290.5px">1.00</b>
<b class="t d" style="left:912px;width:87px;top:290.5px">0.00</b>
<b class="t d" style="left:1000px;width:87px;top:290.5px">0.00</b>
<b class="t d" style="left:1088px;width:87px;top:290.5px">2.40</b>
<b class="t d" style="left:89px;width:43px;top:318.5px">2</b>
<b class="t d nm" style="left:133px;width:162px;top:318.5px">1AAS2-2</b>
<b class="t d" style="left:296px;width:87px;top:318.5px">241.60</b>
<b class="t d" style="left:384px;width:87px;top:318.5px">242.00</b>
<b class="t d" style="left:472px;width:87px;top:318.5px">241.50</b>
<b class="t d" style="left:560px;width:87px;top:318.5px">0.00</b>
<b class="t d" style="left:648px;width:87px;top:318.5px">0.00</b>
<b class="t d" style="left:736px;width:87px;top:318.5px">0.00</b>
<b class="t d" style="left:824px;width:87px;top:318.5px">1.00</b>
<b class="t d" style="left:912px;width:87px;top:318.5px">0.00</b>
<b class="t d" style="left:1000px;width:87px;top:318.5px">0.00</b>
<b class="t d sel" style="left:1088px;width:87px;top:318.5px">1.00</b>
<b class="t d" style="left:89px;width:43px;top:346.5px">1</b>
<b class="t d nm" style="left:133px;width:162px;top:346.5px">1APE2</b>
<b class="t d" style="left:296px;width:87px;top:346.5px">241.00</b>
<b class="t d" style="left:384px;width:87px;top:346.5px">241.50</b>
<b class="t d" style="left:472px;width:87px;top:346.5px">240.90</b>
<b class="t d" style="left:560px;width:87px;top:346.5px">0.00</b>
<b class="t d" style="left:648px;width:87px;top:346.5px">0.00</b>
<b class="t d" style="left:736px;width:87px;top:346.5px">0.00</b>
<b class="t d" style="left:824px;width:87px;top:346.5px">1.00</b>
<b class="t d" style="left:912px;width:87px;top:346.5px">0.00</b>
<b class="t d" style="left:1000px;width:87px;top:346.5px">0.00</b>
<b class="t d" style="left:1088px;width:87px;top:346.5px">70.98</b>
<b class="t d" style="left:89px;width:43px;top:374.5px">2</b>
<b class="t d nm" style="left:133px;width:162px;top:374.5px">1APE2(1ATPY1)</b>
<b class="t d" style="left:296px;width:87px;top:374.5px">241.00</b>
<b class="t d" style="left:384px;width:87px;top:374.5px">241.50</b>
<b class="t d" style="left:472px;width:87px;top:374.5px">240.90</b>
<b class="t d" style="left:560px;width:87px;top:374.5px">0.00</b>
<b class="t d" style="left:648px;width:87px;top:374.5px">0.00</b>
<b class="t d" style="left:736px;width:87px;top:374.5px">0.00</b>
<b class="t d" style="left:824px;width:87px;top:374.5px">1.00</b>
<b class="t d" style="left:912px;width:87px;top:374.5px">0.00</b>
<b class="t d" style="left:1000px;width:87px;top:374.5px">0.00</b>
<b class="t d" style="left:1088px;width:87px;top:374.5px">0.00</b>
<b class="t d" style="left:89px;width:43px;top:402.5px">3</b>
<b class="t d nm" style="left:133px;width:162px;top:402.5px">1APE2(1ATSF1)</b>
<b class="t d" style="left:296px;width:87px;top:402.5px">240.90</b>
<b class="t d" style="left:384px;width:87px;top:402.5px">241.50</b>
<b class="t d" style="left:472px;width:87px;top:402.5px">241.00</b>
<b class="t d" style="left:560px;width:87px;top:402.5px">0.00</b>
<b class="t d" style="left:648px;width:87px;top:402.5px">0.00</b>
<b class="t d" style="left:736px;width:87px;top:402.5px">0.00</b>
<b class="t d" style="left:824px;width:87px;top:402.5px">1.00</b>
<b class="t d" style="left:912px;width:87px;top:402.5px">0.00</b>
<b class="t d" style="left:1000px;width:87px;top:402.5px">0.00</b>
<b class="t d" style="left:1088px;width:87px;top:402.5px">0.00</b>
<b class="t d" style="left:89px;width:43px;top:430.5px">4</b>
<b class="t d nm" style="left:133px;width:162px;top:430.5px">1APE2(2ATPY1)</b>
<b class="t d" style="left:296px;width:87px;top:430.5px">241.20</b>
<b class="t d" style="left:384px;width:87px;top:430.5px">241.70</b>
<b class="t d" style="left:472px;width:87px;top:430.5px">241.00</b>
<b class="t d" style="left:560px;width:87px;top:430.5px">0.00</b>
<b class="t d" style="left:648px;width:87px;top:430.5px">0.00</b>
<b class="t d" style="left:736px;width:87px;top:430.5px">0.00</b>
<b class="t d" style="left:824px;width:87px;top:430.5px">1.00</b>
<b class="t d" style="left:912px;width:87px;top:430.5px">0.00</b>
<b class="t d" style="left:1000px;width:87px;top:430.5px">0.00</b>
<b class="t d" style="left:1088px;width:87px;top:430.5px">0.24</b>
<b class="t d" style="left:89px;width:43px;top:458.5px">5</b>
<b class="t d nm" style="left:133px;width:162px;top:458.5px">1APE2(2ATSF1)</b>
<b class="t d" style="left:296px;width:87px;top:458.5px">241.20</b>
<b class="t d" style="left:384px;width:87px;top:458.5px">241.60</b>
<b class="t d" style="left:472px;width:87px;top:458.5px">241.10</b>
<b class="t d" style="left:560px;width:87px;top:458.5px">0.00</b>
<b class="t d" style="left:648px;width:87px;top:458.5px">0.00</b>
<b class="t d" style="left:736px;width:87px;top:458.5px">0.00</b>
<b class="t d" style="left:824px;width:87px;top:458.5px">1.00</b>
<b class="t d" style="left:912px;width:87px;top:458.5px">0.00</b>
<b class="t d" style="left:1000px;width:87px;top:458.5px">0.00</b>
<b class="t d" style="left:1088px;width:87px;top:458.5px">0.00</b>
<b class="t d" style="left:89px;width:43px;top:486.5px">6</b>
<b class="t d nm" style="left:133px;width:162px;top:486.5px">1APE2(2ATJL)</b>
<b class="t d" style="left:296px;width:87px;top:486.5px">241.10</b>
<b class="t d" style="left:384px;width:87px;top:486.5px">241.70</b>
<b class="t d" style="left:472px;width:87px;top:486.5px">241.10</b>
<b class="t d" style="left:560px;width:87px;top:486.5px">0.00</b>
<b class="t d" style="left:648px;width:87px;top:486.5px">0.00</b>
<b class="t d" style="left:736px;width:87px;top:486.5px">0.00</b>
<b class="t d" style="left:824px;width:87px;top:486.5px">1.00</b>
<b class="t d" style="left:912px;width:87px;top:486.5px">0.00</b>
<b class="t d" style="left:1000px;width:87px;top:486.5px">0.00</b>
<b class="t d" style="left:1088px;width:87px;top:486.5px">0.01</b>
<b class="t d" style="left:89px;width:43px;top:514.5px">7</b>
<b class="t d nm" style="left:133px;width:162px;top:514.5px">1APE2(3ATPY1)</b>
<b class="t d" style="left:296px;width:87px;top:514.5px">241.10</b>
<b class="t d" style="left:384px;width:87px;top:514.5px">241.70</b>
<b class="t d" style="left:472px;width:87px;top:514.5px">241.00</b>
<b class="t d" style="left:560px;width:87px;top:514.5px">0.00</b>
<b class="t d" style="left:648px;width:87px;top:514.5px">0.00</b>
<b class="t d" style="left:736px;width:87px;top:514.5px">0.00</b>
<b class="t d" style="left:824px;width:87px;top:514.5px">1.00</b>
<b class="t d" style="left:912px;width:87px;top:514.5px">0.00</b>
<b class="t d" style="left:1000px;width:87px;top:514.5px">0.00</b>
<b class="t d" style="left:1088px;width:87px;top:514.5px">2.18</b>
<b class="t d" style="left:89px;width:43px;top:542.5px">8</b>
<b class="t d nm" style="left:133px;width:162px;top:542.5px">1APE2(3ATSF1)</b>
<b class="t d" style="left:296px;width:87px;top:542.5px">241.10</b>
<b class="t d" style="left:384px;width:87px;top:542.5px">241.70</b>
<b class="t d" style="left:472px;width:87px;top:542.5px">241.00</b>
<b class="t d" style="left:560px;width:87px;top:542.5px">0.00</b>
<b class="t d" style="left:648px;width:87px;top:542.5px">0.00</b>
<b class="t d" style="left:736px;width:87px;top:542.5px">0.00</b>
<b class="t d" style="left:824px;width:87px;top:542.5px">1.00</b>
<b class="t d" style="left:912px;width:87px;top:542.5px">0.00</b>
<b class="t d" style="left:1000px;width:87px;top:542.5px">0.00</b>
<b class="t d" style="left:1088px;width:87px;top:542.5px">0.27</b>
<b class="t d" style="left:89px;width:43px;top:570.5px">9</b>
<b class="t d nm" style="left:133px;width:162px;top:570.5px">1APE2(3ATJL)</b>
<b class="t d" style="left:296px;width:87px;top:570.5px">241.10</b>
<b class="t d" style="left:384px;width:87px;top:570.5px">241.50</b>
<b class="t d" style="left:472px;width:87px;top:570.5px">241.10</b>
<b class="t d" style="left:560px;width:87px;top:570.5px">0.00</b>
<b class="t d" style="left:648px;width:87px;top:570.5px">0.00</b>
<b class="t d" style="left:736px;width:87px;top:570.5px">0.00</b>
<b class="t d" style="left:824px;width:87px;top:570.5px">1.00</b>
<b class="t d" style="left:912px;width:87px;top:570.5px">0.00</b>
<b class="t d" style="left:1000px;width:87px;top:570.5px">0.00</b>
<b class="t d" style="left:1088px;width:87px;top:570.5px">0.00</b>
<b class="t d" style="left:89px;width:43px;top:598.5px">10</b>
<b class="t d nm" style="left:133px;width:162px;top:598.5px">1APE2(4ATZF1)</b>
<b class="t d" style="left:296px;width:87px;top:598.5px">241.10</b>
<b class="t d" style="left:384px;width:87px;top:598.5px">241.60</b>
<b class="t d" style="left:472px;width:87px;top:598.5px">241.10</b>
<b class="t d" style="left:560px;width:87px;top:598.5px">0.00</b>
<b class="t d" style="left:648px;width:87px;top:598.5px">0.00</b>
<b class="t d" style="left:736px;width:87px;top:598.5px">0.00</b>
<b class="t d" style="left:824px;width:87px;top:598.5px">1.00</b>
<b class="t d" style="left:912px;width:87px;top:598.5px">0.00</b>
<b class="t d" style="left:1000px;width:87px;top:598.5px">0.00</b>
<b class="t d" style="left:1088px;width:87px;top:598.5px">0.51</b>
<b class="t d" style="left:89px;width:43px;top:626.5px">1</b>
<b class="t d nm" style="left:133px;width:162px;top:626.5px">1ALS1</b>
<b class="t d" style="left:296px;width:87px;top:626.5px">241.40</b>
<b class="t d" style="left:384px;width:87px;top:626.5px">242.10</b>
<b class="t d" style="left:472px;width:87px;top:626.5px">241.10</b>
<b class="t d" style="left:560px;width:87px;top:626.5px">0.00</b>
<b class="t d" style="left:648px;width:87px;top:626.5px">0.00</b>
<b class="t d" style="left:736px;width:87px;top:626.5px">0.00</b>
<b class="t d" style="left:824px;width:87px;top:626.5px">0.00</b>
<b class="t d" style="left:912px;width:87px;top:626.5px">0.00</b>
<b class="t d" style="left:1000px;width:87px;top:626.5px">0.00</b>
<b class="t d" style="left:1088px;width:87px;top:626.5px">23.12</b>
<b class="t d" style="left:89px;width:43px;top:654.5px">1</b>
<b class="t d nm" style="left:133px;width:162px;top:654.5px">1ATGS-1</b>
<b class="t d" style="left:296px;width:87px;top:654.5px">240.80</b>
<b class="t d" style="left:384px;width:87px;top:654.5px">241.40</b>
<b class="t d" style="left:472px;width:87px;top:654.5px">240.90</b>
<b class="t d" style="left:560px;width:87px;top:654.5px">0.00</b>
<b class="t d" style="left:648px;width:87px;top:654.5px">0.00</b>
<b class="t d" style="left:736px;width:87px;top:654.5px">0.00</b>
<b class="t d" style="left:824px;width:87px;top:654.5px">1.00</b>
<b class="t d" style="left:912px;width:87px;top:654.5px">0.00</b>
<b class="t d" style="left:1000px;width:87px;top:654.5px">0.00</b>
<b class="t d" style="left:1088px;width:87px;top:654.5px">115.14</b>
<b class="t d" style="left:89px;width:43px;top:682.5px">2</b>
<b class="t d nm" style="left:133px;width:162px;top:682.5px">1ATGS-2</b>
<b class="t d" style="left:296px;width:87px;top:682.5px">241.00</b>
<b class="t d" style="left:384px;width:87px;top:682.5px">241.80</b>
<b class="t d" style="left:472px;width:87px;top:682.5px">241.10</b>
<b class="t d" style="left:560px;width:87px;top:682.5px">0.00</b>
<b class="t d" style="left:648px;width:87px;top:682.5px">0.00</b>
<b class="t d" style="left:736px;width:87px;top:682.5px">0.00</b>
<b class="t d" style="left:824px;width:87px;top:682.5px">0.00</b>
<b class="t d" style="left:912px;width:87px;top:682.5px">0.00</b>
<b class="t d" style="left:1000px;width:87px;top:682.5px">0.00</b>
<b class="t d" style="left:1088px;width:87px;top:682.5px">0.00</b>
<b class="t d" style="left:89px;width:43px;top:710.5px">3</b>
<b class="t d nm" style="left:133px;width:162px;top:710.5px">1ATGS-3</b>
<b class="t d" style="left:296px;width:87px;top:710.5px">241.10</b>
<b class="t d" style="left:384px;width:87px;top:710.5px">241.70</b>
<b class="t d" style="left:472px;width:87px;top:710.5px">241.00</b>
<b class="t d" style="left:560px;width:87px;top:710.5px">0.00</b>
<b class="t d" style="left:648px;width:87px;top:710.5px">0.00</b>
<b class="t d" style="left:736px;width:87px;top:710.5px">0.00</b>
<b class="t d" style="left:824px;width:87px;top:710.5px">0.00</b>
<b class="t d" style="left:912px;width:87px;top:710.5px">0.00</b>
<b class="t d" style="left:1000px;width:87px;top:710.5px">0.00</b>
<b class="t d" style="left:1088px;width:87px;top:710.5px">0.00</b>
<b class="t d" style="left:89px;width:43px;top:738.5px">4</b>
<b class="t d nm" style="left:133px;width:162px;top:738.5px">1ATGS-4</b>
<b class="t d" style="left:296px;width:87px;top:738.5px">241.20</b>
<b class="t d" style="left:384px;width:87px;top:738.5px">241.90</b>
<b class="t d" style="left:472px;width:87px;top:738.5px">241.00</b>
<b class="t d" style="left:560px;width:87px;top:738.5px">0.00</b>
<b class="t d" style="left:648px;width:87px;top:738.5px">0.00</b>
<b class="t d" style="left:736px;width:87px;top:738.5px">0.00</b>
<b class="t d" style="left:824px;width:87px;top:738.5px">0.00</b>
<b class="t d" style="left:912px;width:87px;top:738.5px">0.00</b>
<b class="t d" style="left:1000px;width:87px;top:738.5px">0.00</b>
<b class="t d" style="left:1088px;width:87px;top:738.5px">0.00</b>
<b class="t d" style="left:89px;width:43px;top:766.5px">5</b>
<b class="t d nm" style="left:133px;width:162px;top:766.5px">1ATGS-5</b>
<b class="t d" style="left:296px;width:87px;top:766.5px">241.00</b>
<b class="t d" style="left:384px;width:87px;top:766.5px">241.70</b>
<b class="t d" style="left:472px;width:87px;top:766.5px">241.00</b>
<b class="t d" style="left:560px;width:87px;top:766.5px">0.04</b>
<b class="t d" style="left:648px;width:87px;top:766.5px">0.02</b>
<b class="t d" style="left:736px;width:87px;top:766.5px">0.00</b>
<b class="t d" style="left:824px;width:87px;top:766.5px">0.55</b>
<b class="t d" style="left:912px;width:87px;top:766.5px">0.01</b>
<b class="t d" style="left:1000px;width:87px;top:766.5px">0.01</b>
<b class="t d" style="left:1088px;width:87px;top:766.5px">0.00</b>
<b class="t d" style="left:89px;width:43px;top:794.5px">6</b>
<b class="t d nm" style="left:133px;width:162px;top:794.5px">1ATGS-6</b>
<b class="t d" style="left:296px;width:87px;top:794.5px">241.10</b>
<b class="t d" style="left:384px;width:87px;top:794.5px">241.70</b>
<b class="t d" style="left:472px;width:87px;top:794.5px">241.00</b>
<b class="t d" style="left:560px;width:87px;top:794.5px">0.00</b>
<b class="t d" style="left:648px;width:87px;top:794.5px">0.00</b>
<b class="t d" style="left:736px;width:87px;top:794.5px">0.00</b>
<b class="t d" style="left:824px;width:87px;top:794.5px">0.00</b>
<b class="t d" style="left:912px;width:87px;top:794.5px">0.00</b>
<b class="t d" style="left:1000px;width:87px;top:794.5px">0.00</b>
<b class="t d" style="left:1088px;width:87px;top:794.5px">0.00</b>
<b class="t d" style="left:89px;width:43px;top:822.5px">1</b>
<b class="t d nm" style="left:133px;width:162px;top:822.5px">1APS1</b>
<b class="t d" style="left:296px;width:87px;top:822.5px">241.00</b>
<b class="t d" style="left:384px;width:87px;top:822.5px">241.40</b>
<b class="t d" style="left:472px;width:87px;top:822.5px">241.00</b>
<b class="t d" style="left:560px;width:87px;top:822.5px">0.00</b>
<b class="t d" style="left:648px;width:87px;top:822.5px">0.00</b>
<b class="t d" style="left:736px;width:87px;top:822.5px">0.00</b>
<b class="t d" style="left:824px;width:87px;top:822.5px">1.00</b>
<b class="t d" style="left:912px;width:87px;top:822.5px">0.00</b>
<b class="t d" style="left:1000px;width:87px;top:822.5px">0.00</b>
<b class="t d" style="left:1088px;width:87px;top:822.5px">0.00</b>
<b class="t d nm" style="left:33px;width:55px;top:178.5px">1ATGES</b>
<b class="t d nm" style="left:33px;width:55px;top:304.5px">1AAS2</b>
<b class="t d nm" style="left:33px;width:55px;top:472.5px">1APE2</b>
<b class="t d nm" style="left:33px;width:55px;top:626.5px">1ALS1</b>
<b class="t d nm" style="left:33px;width:55px;top:724.5px">1ATGS</b>
<b class="t d nm" style="left:33px;width:55px;top:822.5px">1APS1</b>
<svg width="32" height="18" style="position:absolute;left:0;top:0"><path d="M20 18 L32 6 M24 18 L32 10 M28 18 L32 14" stroke="#A0A0A0" stroke-width="1.3"/></svg>
</div>
<div id="vscroll">
 <div class="sbtn" style="top:1px"><svg width="13" height="14" style="position:absolute;left:0;top:0"><path d="M3 9 L6.5 5.5 L10 9" fill="#333"/></svg></div>
 <div class="sbtn" style="top:704px;height:67px"><svg width="13" height="65" style="position:absolute;left:0;top:0"><path d="M4 29.5 H9 M4 32.5 H9 M4 35.5 H9" stroke="#666" stroke-width="1"/></svg></div>
 <div class="sbtn" style="top:818px"><svg width="13" height="14" style="position:absolute;left:0;top:0"><path d="M3 5 L6.5 8.5 L10 5" fill="#555"/></svg></div>
</div>
<div id="tabbar">
 <div class="nb" style="left:0"><svg width="17" height="15"><path d="M5 3 V12 M12 3 L7 7.5 L12 12 Z" stroke="#000" stroke-width="1.2" fill="#000"/></svg></div>
 <div class="nb" style="left:17px"><svg width="17" height="15"><path d="M11 3 L6 7.5 L11 12 Z" fill="#000"/></svg></div>
 <div class="nb" style="left:34px"><svg width="17" height="15"><path d="M6 3 L11 7.5 L6 12 Z" fill="#000"/></svg></div>
 <div class="nb" style="left:51px;border-right:1px solid #A5A5A5"><svg width="17" height="15"><path d="M5 3 L10 7.5 L5 12 Z M12 3 V12" stroke="#000" stroke-width="1.2" fill="#000"/></svg></div>
 <svg width="95" height="17" style="position:absolute;left:68px;top:-1px"><path d="M0 0 L9 16 H81 L88 0" fill="#fff" stroke="#222" stroke-width="1"/></svg>
 <span style="position:absolute;left:84px;top:1px;font-size:12px;line-height:14px;color:#000">电参量报表</span>
</div>
<div id="corner" style="position:absolute;left:1486px;top:996px;width:17px;height:17px;background:#F0F0F0;border:1px solid #A0A0A0;border-top:none"><svg width="15" height="15"><path d="M5 12 L12 12 L12 5 Z" fill="#000"/></svg></div>

<!-- nav -->
<div id="nav">
 <div class="nv" style="left:0;width:151px"><span style="left:-3px">配电监测</span></div>
 <div class="nv" style="left:151px"><span>趋势曲线</span></div>
 <div class="nv" style="left:301px"><span>电参量报表</span></div>
 <div class="nv" style="left:451px"><span>电能报表</span></div>
 <div class="nv" style="left:601px"><span>报警查询</span></div>
 <div class="nv" style="left:751px"><span>通讯状态</span></div>
 <div class="nv" style="left:901px"><span>用户管理</span></div>
 <div class="nv" style="left:1051px"></div>
 <div class="nv" style="left:1201px"></div>
 <div class="nv" style="left:1351px"></div>
 <div class="nv" style="left:1501px"></div>
 <div class="nv" style="left:1651px"></div>
</div>
<!-- watermark -->
<svg width="150" height="60" style="position:absolute;left:1770px;top:1020px" viewBox="0 0 150 60">
 <g opacity="0.85">
  <g fill="#F2F8FF">
   <circle cx="29" cy="40" r="19"/>
   <path d="M17 26 Q30 18 36 16 Q39 13 37.5 10 Q41 15 41 22 L40 26 Z"/>
  </g>
  <g fill="none" stroke="#62A3F0" stroke-width="1.3">
   <path d="M21 37 L29 31 M22 52 L37 41"/>
   <circle cx="18.5" cy="39" r="2.6"/>
   <circle cx="40" cy="39" r="2.6"/>
  </g>
  <text x="57" y="43" font-family="Liberation Sans" font-size="17" font-weight="bold" fill="#F2F8FF" textLength="87" lengthAdjust="spacingAndGlyphs">电子发烧友</text>
  <text x="57" y="53" font-family="Liberation Sans" font-size="8.5" font-weight="bold" fill="#F2F8FF" textLength="87" lengthAdjust="spacingAndGlyphs">www.elecfans.com</text>
 </g>
</svg>
</body>
</html>
